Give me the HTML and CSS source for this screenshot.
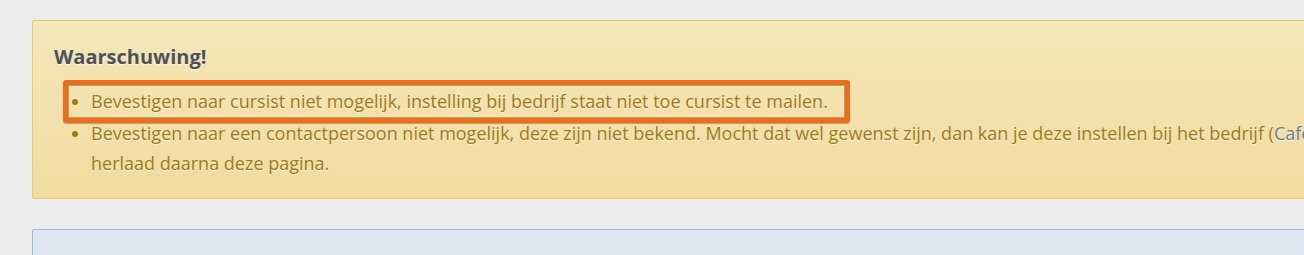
FILE: index.html
```html
<!DOCTYPE html>
<html lang="nl">
<head>
<meta charset="utf-8">
<title>Waarschuwing</title>
<link rel="stylesheet" href="styles.css">
</head>
<body>
  <div class="page">
    <div class="alert alert-warning">
      <h4 class="alert-heading">Waarschuwing!</h4>
      <ul class="alert-list">
        <li class="highlighted">Bevestigen naar cursist niet mogelijk, instelling bij bedrijf staat niet toe cursist te mailen.</li>
        <li>Bevestigen naar een contactpersoon niet mogelijk, deze zijn niet bekend. Mocht dat wel gewenst zijn, dan kan je deze instellen bij het bedrijf (<a href="#" class="alert-link">Cafetaria De Hoek</a>) en herlaad daarna deze pagina.</li>
      </ul>
    </div>
    <div class="alert alert-info"></div>
  </div>
</body>
</html>
```

FILE: styles.css
```css
html, body {
  margin: 0;
  padding: 0;
}

body {
  background: #ececec;
  font-family: "Open Sans", "Liberation Sans", sans-serif;
  overflow: hidden;
  width: 1304px;
  height: 255px;
}

.page {
  padding: 20px 0 0 32px;
}

.alert {
  box-sizing: border-box;
  width: 1504px;
  border: 1px solid;
  border-radius: 2px;
}

.alert-warning {
  background: linear-gradient(to bottom, #f4e7b8 0%, #f0dc9f 100%);
  border-color: #ebcb68;
  padding: 24px 36px 20px 21px;
  margin-bottom: 30px;
}

.alert-heading {
  margin: 0;
  font-size: 20px;
  line-height: 24px;
  font-weight: 700;
  color: #4d5159;
  text-shadow: 0 1px 0 rgba(255, 255, 255, 0.6);
}

.alert-list {
  margin: 17px 0 0;
  padding-left: 37px;
  font-size: 18px;
  line-height: 30px;
  color: #9d7a1c;
  text-shadow: 0 1px 0 rgba(255, 255, 255, 0.5);
}

.alert-list li {
  position: relative;
}

.alert-list li + li {
  margin-top: 2px;
}

.alert-list li.highlighted::after {
  content: "";
  position: absolute;
  left: -28px;
  top: -6px;
  width: 777px;
  height: 33px;
  border: 5px solid #ec6e1d;
  border-radius: 3px;
  box-shadow: inset 0 0 0 1px rgba(110, 80, 30, 0.45), 0 1px 1px rgba(110, 80, 30, 0.45);
  pointer-events: none;
}

.alert-link {
  color: #6b7a9c;
  text-decoration: none;
}

.alert-info {
  height: 60px;
  background: linear-gradient(to bottom, #dfe7f2 0%, #d9e3ef 100%);
  border-color: #a2bcdf;
}
```
